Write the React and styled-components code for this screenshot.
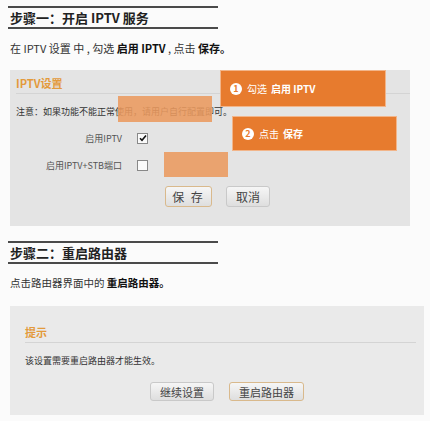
import styled, { createGlobalStyle } from "styled-components";

const Global = createGlobalStyle`
  body {
    margin: 0;
    background: #fbfbfb;
    font-family: "Noto Sans CJK SC", "Liberation Sans", sans-serif;
    color: #333;
  }
`;

const Page = styled.div`
  width: 430px;
  height: 421px;
  overflow: hidden;
  padding-left: 8px;
  box-sizing: border-box;
`;

const StepHeading = styled.h2`
  width: 208px;
  margin: ${(p) => p.$top}px 0 0;
  border-top: 2px solid #4a4a4a;
  border-bottom: 2px solid #4a4a4a;
  padding-left: 2px;
  font-size: 13px;
  line-height: 19px;
  font-weight: 700;
  color: #222;
`;

const Lead = styled.p`
  margin: 12px 0 0 2px;
  font-size: ${(p) => p.$size}px;
  line-height: 14px;
  color: #333;
  b {
    color: #111;
  }
`;

const Panel = styled.div`
  position: relative;
  margin: ${(p) => p.$top}px 0 0 2px;
  width: ${(p) => p.$w}px;
  background: ${(p) => p.$bg};
  padding-bottom: ${(p) => p.$pb}px;
`;

const PanelTitle = styled.div`
  margin: 0 ${(p) => p.$mr}px 0 ${(p) => p.$ml}px;
  padding-top: ${(p) => p.$pt}px;
  padding-bottom: 3px;
  border-bottom: 1px solid #d4d4d4;
  font-size: 11px;
  line-height: 14px;
  font-weight: 700;
  color: #e39a3c;
`;

const Note = styled.div`
  margin: 11px 0 0 ${(p) => p.$ml}px;
  font-size: 9px;
  line-height: 14px;
  color: #333;
`;

const FormRow = styled.div`
  display: flex;
  align-items: center;
  height: 20px;
  margin-top: ${(p) => p.$top}px;
`;

const Label = styled.span`
  width: 112px;
  text-align: right;
  font-size: 9px;
  color: #555;
`;

const Check = styled.span`
  margin-left: 15px;
  width: 9px;
  height: 9px;
  border: 1px solid #888;
  background: #fafafa;
  display: flex;
  align-items: center;
  justify-content: center;
`;

const Buttons = styled.div`
  display: flex;
  gap: ${(p) => p.$gap}px;
  margin-top: ${(p) => p.$top}px;
  padding-left: ${(p) => p.$pl}px;
`;

const Button = styled.button`
  width: ${(p) => p.$w}px;
  height: ${(p) => p.$h}px;
  padding: 0;
  border: 1px solid ${(p) => (p.$primary ? "#d9b98c" : "#c9c9c9")};
  border-radius: 3px;
  background: linear-gradient(#f6f6f6, #dedede);
  font-family: "Noto Sans CJK SC", sans-serif;
  font-size: ${(p) => p.$size || 11}px;
  color: #444;
  letter-spacing: ${(p) => (p.$spaced ? "2px" : "0")};
`;

const Redact = styled.div`
  position: absolute;
  left: ${(p) => p.$x}px;
  top: ${(p) => p.$y}px;
  width: ${(p) => p.$w}px;
  height: ${(p) => p.$h}px;
  background: #eb9a5f;
  opacity: 0.88;
`;

const Callout = styled.div`
  position: absolute;
  left: ${(p) => p.$x}px;
  top: ${(p) => p.$y}px;
  width: ${(p) => p.$w}px;
  height: ${(p) => p.$h}px;
  box-sizing: border-box;
  background: #e77b2e;
  border: 1px solid #f2b58a;
  display: flex;
  align-items: center;
  padding-left: 9px;
  gap: 5px;
  color: #fff;
  font-size: 10px;
  b {
    margin-left: 4px;
    font-weight: 700;
  }
`;

const Num = styled.span`
  width: 12px;
  height: 12px;
  border-radius: 50%;
  background: #fff;
  color: #e77b2e;
  font-size: 9px;
  line-height: 12px;
  text-align: center;
  font-weight: 700;
`;

function Tick() {
  return (
    <svg width="8" height="8" viewBox="0 0 8 8">
      <path d="M1 4.2 L3 6.3 L7 1.5" fill="none" stroke="#111" strokeWidth="1.6" />
    </svg>
  );
}

export default function App() {
  return (
    <>
      <Global />
      <Page>
        <StepHeading $top={6}>步骤一：开启 IPTV 服务</StepHeading>
        <Lead $size={11}>
          在 IPTV 设置 中 , 勾选 <b>启用 IPTV</b> , 点击 <b>保存。</b>
        </Lead>

        <Panel $top={15} $w={400} $bg="#e4e4e4" $pb={19}>
          <PanelTitle $ml={6} $mr={0} $pt={6}>IPTV设置</PanelTitle>
          <Note $ml={6}>注意：如果功能不能正常使用，请用户自行配置即可。</Note>
          <FormRow $top={9}>
            <Label>启用IPTV</Label>
            <Check>
              <Tick />
            </Check>
          </FormRow>
          <FormRow $top={7}>
            <Label>启用IPTV+STB端口</Label>
            <Check />
          </FormRow>
          <Buttons $gap={14} $top={11} $pl={155}>
            <Button $w={47} $h={21} $size={12} $primary $spaced>
              保 存
            </Button>
            <Button $w={44} $h={21} $size={12}>取消</Button>
          </Buttons>

          <Redact $x={108} $y={26} $w={94} $h={26} />
          <Redact $x={154} $y={82} $w={64} $h={25} />
          <Callout $x={210} $y={0} $w={166} $h={37}>
            <Num>1</Num>
            <span>
              勾选<b>启用 IPTV</b>
            </span>
          </Callout>
          <Callout $x={222} $y={46} $w={165} $h={35}>
            <Num>2</Num>
            <span>
              点击<b>保存</b>
            </span>
          </Callout>
        </Panel>

        <StepHeading $top={15}>步骤二：重启路由器</StepHeading>
        <Lead $size={10.5}>
          点击路由器界面中的 <b>重启路由器。</b>
        </Lead>

        <Panel $top={16} $w={414} $bg="#eaeaea" $pb={14}>
          <PanelTitle $ml={15} $mr={8} $pt={19}>提示</PanelTitle>
          <Note $ml={15}>该设置需要重启路由器才能生效。</Note>
          <Buttons $gap={15} $top={14} $pl={140}>
            <Button $w={64} $h={19}>继续设置</Button>
            <Button $w={75} $h={19} $primary>重启路由器</Button>
          </Buttons>
        </Panel>
      </Page>
    </>
  );
}
